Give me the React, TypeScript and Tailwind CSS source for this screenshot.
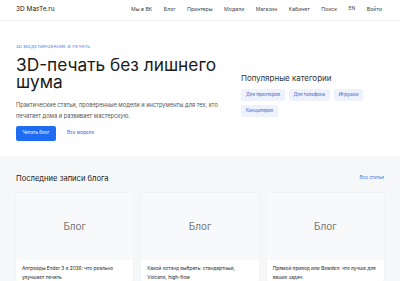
const nav = ["Мы в ВК", "Блог", "Принтеры", "Модели", "Магазин", "Кабинет", "Поиск"];

const categories = ["Для принтеров", "Для телефона", "Игрушки", "Канцелярия"];

const posts = [
  "Апгрейды Ender 3 в 2026: что реально улучшает печать",
  "Какой хотэнд выбрать: стандартный, Volcano, high-flow",
  "Прямой привод или Bowden: что лучше для ваших задач",
];

function Header() {
  return (
    <header className="flex h-[22px] items-center justify-between border-b border-[#eef0f3] bg-white pl-4 pr-[18px]">
      <a href="#" className="text-[6.5px] text-[#222]">3D MasTe.ru</a>
      <nav className="flex items-center gap-[11.5px] text-[5.2px] text-[#444]">
        {nav.map((item) => (
          <a key={item} href="#">{item}</a>
        ))}
        <span className="-mt-[3px] text-[5px]">EN</span>
        <a href="#">Войти</a>
      </nav>
    </header>
  );
}

function Hero() {
  return (
    <section className="flex bg-white px-4 pb-[15px] pt-[23px]">
      <div className="w-[225px]">
        <div className="text-[4.1px] uppercase tracking-[0.3px] text-[#2f6fe6]">3D моделирование и печать</div>
        <h1 className="mt-[5px] text-[17.3px] leading-[17px] text-[#1a1a1a]">3D-печать без лишнего шума</h1>
        <p className="mt-[9px] text-[5.7px] leading-[11px] text-[#555]">
          Практические статьи, проверенные модели и инструменты для тех, кто печатает дома и развивает мастерскую.
        </p>
        <div className="mt-[5px] flex gap-1">
          <a href="#" className="flex h-[15px] w-[40px] items-center justify-center rounded-[2px] bg-[#1d6cf2] text-[4.6px] text-white">
            Читать блог
          </a>
          <a href="#" className="flex h-[15px] w-[41px] items-center justify-center rounded-[2px] bg-white text-[4.6px] text-[#2f63d6] shadow-[0_0_2px_rgba(0,0,0,0.06)]">
            Все модели
          </a>
        </div>
      </div>
      <div className="pt-[29px]">
        <h2 className="text-[8px] leading-[10px] text-[#333]">Популярные категории</h2>
        <div className="mt-[6px] flex w-[130px] flex-wrap gap-x-[3.5px] gap-y-[4px]">
          {categories.map((c) => (
            <span key={c} className="flex h-[12px] items-center rounded-[2px] bg-[#eef2fd] px-[5px] text-[4.6px] text-[#3d5cc7]">
              {c}
            </span>
          ))}
        </div>
      </div>
    </section>
  );
}

function Card({ title }: { title: string }) {
  return (
    <div className="flex flex-col rounded-[2px] bg-white shadow-[0_0_3px_rgba(0,0,0,0.04)]">
      <div className="flex h-[67px] items-center justify-center bg-[#f8f9fa] text-[10px] text-[#777]">Блог</div>
      <div className="px-[6px] pt-[4px] text-[4.8px] leading-[8.5px] text-[#222]">{title}</div>
    </div>
  );
}

function Blog() {
  return (
    <section className="flex-1 bg-[#f6f7f9] px-4 pt-[17px]">
      <div className="flex items-center justify-between">
        <h2 className="text-[7.6px] text-[#222]">Последние записи блога</h2>
        <a href="#" className="text-[4.6px] text-[#3b6ee8]">Все статьи</a>
      </div>
      <div className="mt-[9px] grid grid-cols-3 gap-2">
        {posts.map((p) => (
          <Card key={p} title={p} />
        ))}
      </div>
    </section>
  );
}

export default function App() {
  return (
    <div className="flex h-[281px] w-[400px] flex-col overflow-hidden bg-[#f6f7f9] font-['Inter',sans-serif]">
      <Header />
      <Hero />
      <Blog />
    </div>
  );
}
